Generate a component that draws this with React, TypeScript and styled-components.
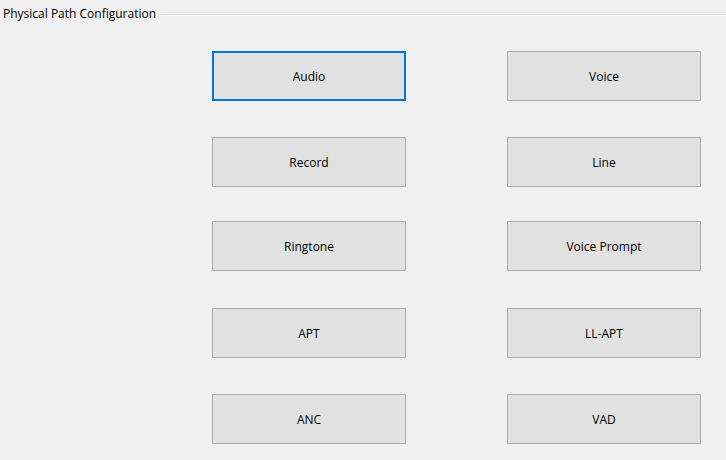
import React from "react";
import styled, { createGlobalStyle } from "styled-components";

const Global = createGlobalStyle`
  html, body { margin: 0; padding: 0; background: #f0f0f0; }
  body { font-family: "Open Sans", "Noto Sans", "Liberation Sans", sans-serif; }
  #root { width: 726px; height: 460px; overflow: hidden; }
`;

const Group = styled.section`
  width: 726px;
  height: 460px;
  box-sizing: border-box;
  background: #f0f0f0;
`;

const Header = styled.div`
  display: flex;
  align-items: center;
  height: 28px;
  padding-left: 3px;
  gap: 3px;
`;

const Title = styled.span`
  font-size: 12px;
  color: #000;
  white-space: nowrap;
  line-height: 16px;
  margin-top: -1px;
`;

const Rule = styled.div`
  flex: 1;
  height: 1px;
  background: #dcdcdc;
  border-bottom: 1px solid #fff;
  margin-top: 1px;
`;

const Rows = styled.div`
  display: flex;
  flex-direction: column;
  padding-left: 212px;
  padding-top: 23px;
`;

const Row = styled.div<{ $mt: number }>`
  display: grid;
  grid-template-columns: 194px 194px;
  column-gap: 101px;
  margin-top: ${(p) => p.$mt}px;
`;

const Btn = styled.button<{ $focused?: boolean }>`
  height: 50px;
  box-sizing: border-box;
  background: #e1e1e1;
  border: ${(p) => (p.$focused ? "2px solid #0078d7" : "1px solid #adadad")};
  font-family: "Open Sans", "Noto Sans", "Liberation Sans", sans-serif;
  font-size: 12px;
  color: #000;
  padding: 0;
  margin: 0;
  outline: none;
  cursor: default;
`;

const rows: { mt: number; items: [string, string] }[] = [
  { mt: 0, items: ["Audio", "Voice"] },
  { mt: 36, items: ["Record", "Line"] },
  { mt: 34, items: ["Ringtone", "Voice Prompt"] },
  { mt: 37, items: ["APT", "LL-APT"] },
  { mt: 36, items: ["ANC", "VAD"] },
];

export default function App() {
  return (
    <>
      <Global />
      <Group>
        <Header>
          <Title>Physical Path Configuration</Title>
          <Rule />
        </Header>
        <Rows>
          {rows.map((r, i) => (
            <Row key={i} $mt={r.mt}>
              {r.items.map((t, j) => (
                <Btn key={t} $focused={i === 0 && j === 0}>
                  {t}
                </Btn>
              ))}
            </Row>
          ))}
        </Rows>
      </Group>
    </>
  );
}
